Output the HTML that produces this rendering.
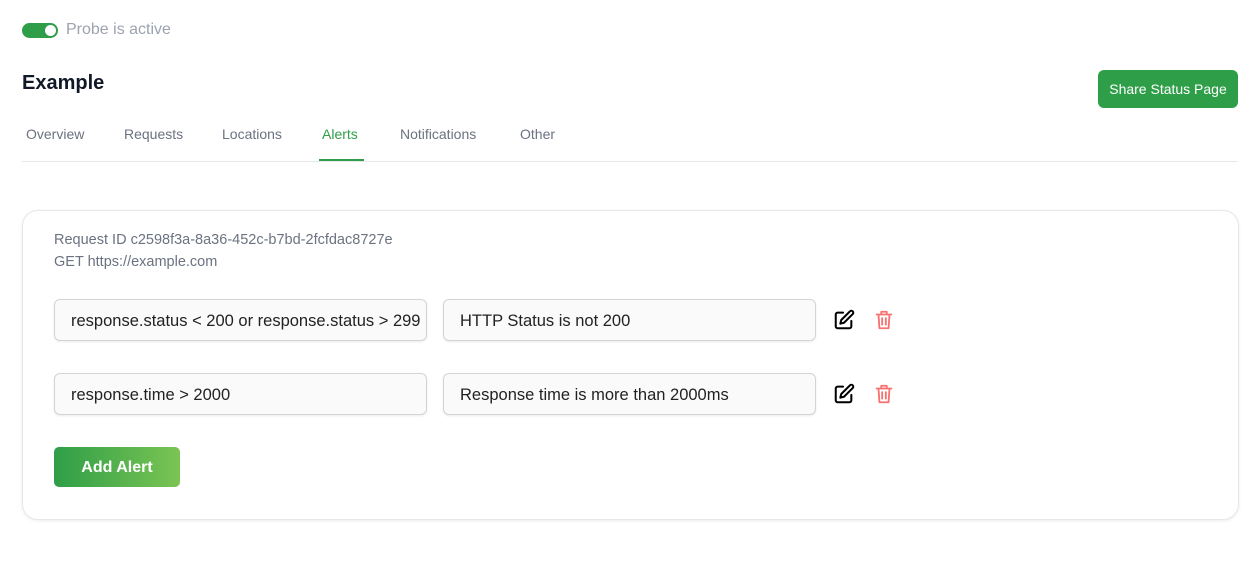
<!DOCTYPE html>
<html><head><style>
*{box-sizing:border-box;margin:0;padding:0}
body{width:1258px;height:576px;background:#fff;font-family:"Liberation Sans",sans-serif;position:relative;overflow:hidden}
.abs{position:absolute}
.toggle{left:22px;top:23px;width:36px;height:15px;border-radius:8px;background:#2f9e48}
.toggle::after{content:"";position:absolute;right:2px;top:2px;width:11px;height:11px;border-radius:50%;background:#fff}
.tab{top:126px;font-size:14px;color:#6b7280}
.inp{height:42px;border:1px solid #d4d4d8;border-radius:6px;background:#fafafa;font-size:16.5px;color:#222;padding:0 16px;line-height:42px;white-space:nowrap;overflow:hidden;box-shadow:0 1px 2px rgba(0,0,0,.08)}
</style></head><body>
<div class="abs toggle"></div>
<div class="abs" style="left:66px;top:21px;font-size:16px;color:#9ca3af">Probe is active</div>
<div class="abs" style="left:22px;top:72px;font-size:20px;font-weight:bold;color:#111827">Example</div>
<div class="abs" style="left:1098px;top:70px;width:140px;height:38px;border-radius:6px;background:#2f9e48;color:#fff;font-size:14px;text-align:center;line-height:38px">Share Status Page</div>
<div class="abs tab" style="left:26px">Overview</div>
<div class="abs tab" style="left:124px">Requests</div>
<div class="abs tab" style="left:222px">Locations</div>
<div class="abs tab" style="left:322px;color:#2f9e48">Alerts</div>
<div class="abs tab" style="left:400px">Notifications</div>
<div class="abs tab" style="left:520px">Other</div>
<div class="abs" style="left:22px;top:161px;width:1216px;height:1px;background:#e5e7eb"></div>
<div class="abs" style="left:319px;top:159px;width:45px;height:2px;background:#2f9e48"></div>
<div class="abs" style="left:22px;top:210px;width:1217px;height:310px;border:1px solid #e5e7eb;border-radius:16px;box-shadow:0 1px 3px rgba(0,0,0,.08)"></div>
<div class="abs" style="left:54px;top:229px;font-size:14.5px;color:#6b7280;line-height:22px">Request ID c2598f3a-8a36-452c-b7bd-2fcfdac8727e<br>GET https://example.com</div>
<div class="abs inp" style="left:54px;top:299px;width:373px">response.status &lt; 200 or response.status &gt; 299</div>
<div class="abs inp" style="left:443px;top:299px;width:373px">HTTP Status is not 200</div>
<div class="abs inp" style="left:54px;top:373px;width:373px">response.time &gt; 2000</div>
<div class="abs inp" style="left:443px;top:373px;width:373px">Response time is more than 2000ms</div>
<svg class="abs" style="left:833px;top:309px" width="22" height="22" viewBox="0 0 24 24" fill="none" stroke="#000" stroke-width="2.2" stroke-linecap="round" stroke-linejoin="round"><path d="M11 4H5a2 2 0 0 0-2 2v13a2 2 0 0 0 2 2h13a2 2 0 0 0 2-2v-6"/><path d="M18.5 2.5a2.1 2.1 0 0 1 3 3L12 15l-4 1 1-4z"/></svg>
<svg class="abs" style="left:833px;top:383px" width="22" height="22" viewBox="0 0 24 24" fill="none" stroke="#000" stroke-width="2.2" stroke-linecap="round" stroke-linejoin="round"><path d="M11 4H5a2 2 0 0 0-2 2v13a2 2 0 0 0 2 2h13a2 2 0 0 0 2-2v-6"/><path d="M18.5 2.5a2.1 2.1 0 0 1 3 3L12 15l-4 1 1-4z"/></svg>
<svg class="abs" style="left:873px;top:309px" width="22" height="22" viewBox="0 0 24 24" fill="none" stroke="#f87171" stroke-width="2" stroke-linecap="round" stroke-linejoin="round"><path d="M4 6h16M9 6V3h6v3M6 6l1 15h10l1-15M10 10v7M14 10v7"/></svg>
<svg class="abs" style="left:873px;top:383px" width="22" height="22" viewBox="0 0 24 24" fill="none" stroke="#f87171" stroke-width="2" stroke-linecap="round" stroke-linejoin="round"><path d="M4 6h16M9 6V3h6v3M6 6l1 15h10l1-15M10 10v7M14 10v7"/></svg>
<div class="abs" style="left:54px;top:447px;width:126px;height:40px;border-radius:5px;background:linear-gradient(90deg,#2f9e48,#7bc453);color:#fff;font-weight:bold;font-size:16px;text-align:center;line-height:41px">Add Alert</div>
</body></html>
